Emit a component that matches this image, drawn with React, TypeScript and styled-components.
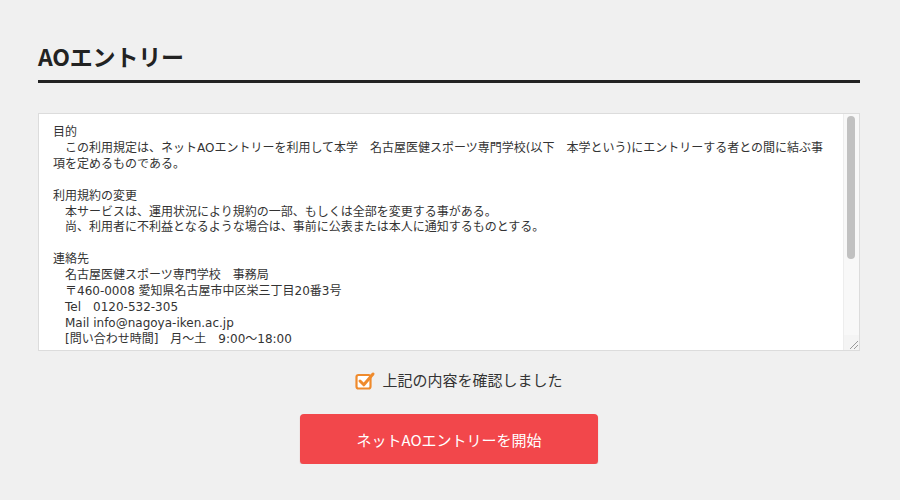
import React, { useState } from "react"
import styled, { createGlobalStyle } from "styled-components"

const GlobalStyle = createGlobalStyle`
  html, body {
    margin: 0;
    padding: 0;
    background: #f0f0f0;
    font-family: "Noto Sans CJK JP", "Noto Sans", sans-serif;
    color: #333;
  }
`

const Page = styled.div`
  padding: 0 40px 0 38px;
`

const Title = styled.h1`
  margin: 44px 0 0;
  padding-bottom: 12px;
  border-bottom: 3px solid #222;
  font-size: 23px;
  line-height: 24px;
  font-weight: 700;
  color: #222;
  letter-spacing: -0.2px;
`

const TermsBox = styled.div`
  display: flex;
  box-sizing: border-box;
  height: 238px;
  margin-top: 30px;
  border: 1px solid #dcdcdc;
  background: #fff;
`

const TermsText = styled.div`
  flex: 1;
  padding: 11px 6px 0 14px;
  overflow: hidden;
  white-space: pre;
  color: #333;
  font-family: "DejaVu Sans", "Noto Sans CJK JP", sans-serif;
  font-size: 12px;
  line-height: 15.9px;
`

const ScrollTrack = styled.div`
  display: flex;
  flex-direction: column;
  width: 15px;
  background: #f8f8f8;
  border-left: 1px solid #ededed;
`

const ScrollThumb = styled.div`
  height: 143px;
  margin: 2px 4px 0 3px;
  border-radius: 4px;
  background: #c1c1c1;
`

const Grip = styled.div`
  margin-top: auto;
  height: 15px;
  display: flex;
  align-items: flex-end;
  justify-content: flex-end;
  background: #f4f4f4;
`

const Agree = styled.label`
  display: flex;
  align-items: center;
  justify-content: center;
  gap: 6px;
  margin: 19px 0 0 20px;
  font-size: 15px;
  line-height: 20px;
  color: #333;
  cursor: pointer;
`

const HiddenInput = styled.input`
  display: none;
`

const StartButton = styled.button`
  display: block;
  width: 298px;
  height: 50px;
  margin: 24px auto 0;
  border: none;
  border-radius: 4px;
  background: ${props => (props.disabled ? "#c9c9c9" : "#f2474b")};
  box-shadow: 0 1px 1px rgba(180, 30, 30, 0.45);
  color: #fff;
  font-family: "Noto Sans CJK JP", sans-serif;
  font-size: 15px;
  cursor: pointer;
`

const terms = `目的
　この利用規定は、ネットAOエントリーを利用して本学　名古屋医健スポーツ専門学校(以下　本学という)にエントリーする者との間に結ぶ事
項を定めるものである。

利用規約の変更
　本サービスは、運用状況により規約の一部、もしくは全部を変更する事がある。
　尚、利用者に不利益となるような場合は、事前に公表または本人に通知するものとする。

連絡先
　名古屋医健スポーツ専門学校　事務局
　〒460-0008 愛知県名古屋市中区栄三丁目20番3号
　Tel　0120-532-305
　Mail info@nagoya-iken.ac.jp
　[問い合わせ時間]　月～土　9:00～18:00`

const CheckIcon = ({ checked }: { checked: boolean }) => (
  <svg width="21" height="19" viewBox="0 0 21 19" fill="none">
    <rect x="1.5" y="4" width="14" height="13.5" rx="2" stroke="#ef8a2c" strokeWidth="2.2" fill="#fff" />
    {checked && (
      <path d="M5 10 L8.8 13.8 L18 3" stroke="#ef8a2c" strokeWidth="3" strokeLinecap="round" strokeLinejoin="round" />
    )}
  </svg>
)

const GripIcon = () => (
  <svg width="12" height="12" viewBox="0 0 12 12">
    <path d="M3 11 L11 3 M7 11 L11 7" stroke="#9a9a9a" strokeWidth="1" />
  </svg>
)

const App = () => {
  const [agreed, setAgreed] = useState(true)

  return (
    <Page>
      <GlobalStyle />
      <Title>AOエントリー</Title>
      <TermsBox>
        <TermsText>{terms}</TermsText>
        <ScrollTrack>
          <ScrollThumb />
          <Grip>
            <GripIcon />
          </Grip>
        </ScrollTrack>
      </TermsBox>
      <Agree>
        <HiddenInput type="checkbox" checked={agreed} onChange={e => setAgreed(e.target.checked)} />
        <CheckIcon checked={agreed} />
        上記の内容を確認しました
      </Agree>
      <StartButton disabled={!agreed}>ネットAOエントリーを開始</StartButton>
    </Page>
  )
}

export default App
